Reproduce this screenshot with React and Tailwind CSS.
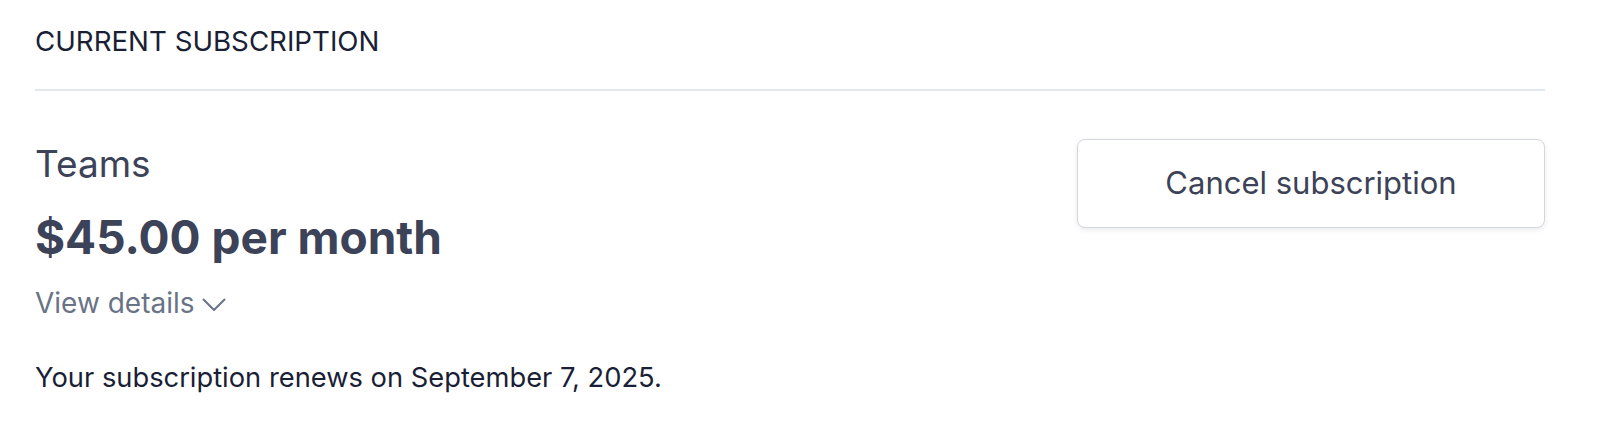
import React from 'react';

// Small chevron next to "View details"
const Chevron = () => (
  <svg width="24" height="14" viewBox="0 0 24 14" fill="none" className="ml-[7px] mt-[4px]">
    <polyline points="1.5,1.5 12,12 22.5,1.5" stroke="#697386" strokeWidth="2" strokeLinecap="round" strokeLinejoin="round" />
  </svg>
);

const App = () => {
  return (
    <div className="bg-white w-full h-[440px] pl-[35px] pr-[59px] font-['Inter','Liberation_Sans',sans-serif]">
      {/* Section header */}
      <div className="pt-[24px] pb-[31px] border-b-2 border-[#e3e8ee]">
        <h2 className="text-[27.7px] leading-[34px] text-[#1a1f36] uppercase">Current subscription</h2>
      </div>

      <div className="flex justify-between items-start pt-[48px]">
        <div className="flex flex-col">
          <p className="text-[37px] leading-[50px] text-[#3c4257]">Teams</p>
          <p className="mt-[20px] text-[46px] leading-[56px] font-bold text-[#3c4257]">$45.00 per month</p>
          <button className="mt-[21px] flex items-center text-[28px] leading-[34px] text-[#697386]">
            View details
            <Chevron />
          </button>
          <p className="mt-[41px] text-[27.3px] leading-[34px] text-[#1a1f36]">
            Your subscription renews on September 7, 2025.
          </p>
        </div>

        <button className="w-[468px] h-[89px] rounded-[8px] border border-[#d3d6dd] bg-white shadow-[0_2px_5px_rgba(60,66,87,0.1)] text-[31px] font-normal text-[#3c4257]">
          Cancel subscription
        </button>
      </div>
    </div>
  );
};

export default App;
